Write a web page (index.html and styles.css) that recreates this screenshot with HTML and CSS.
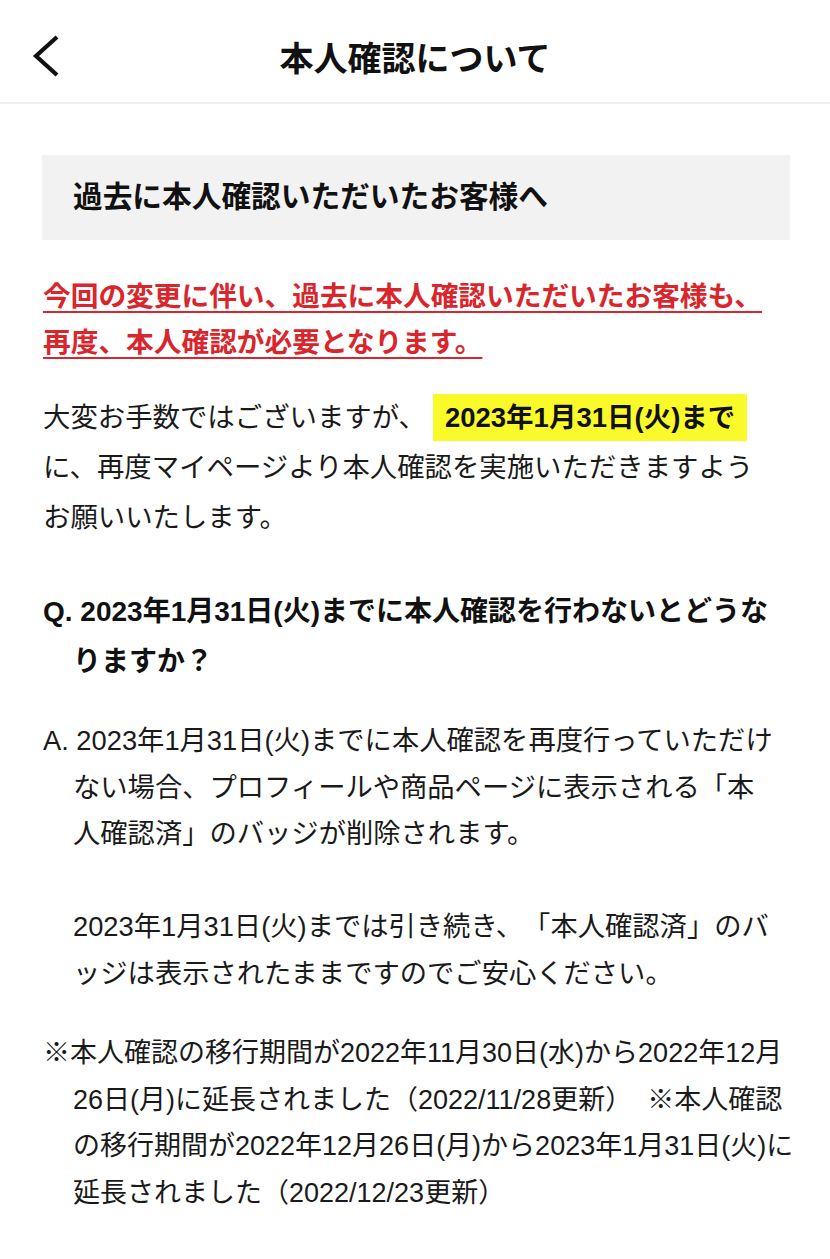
FILE: index.html
```html
<!DOCTYPE html>
<html lang="ja">
<head>
<meta charset="utf-8">
<title>本人確認について</title>
<link rel="stylesheet" href="styles.css">
</head>
<body>
<header class="topbar">
  <div class="topbar-side">
    <svg class="back" width="30" height="50" viewBox="0 0 30 50" aria-hidden="true">
      <path d="M26 6 L5 25 L26 44" fill="none" stroke="#111" stroke-width="4.2" stroke-linecap="butt" stroke-linejoin="miter"/>
    </svg>
  </div>
  <h1 class="topbar-title">本人確認について</h1>
  <div class="topbar-side"></div>
</header>
<main class="content">
  <div class="notice-box">過去に本人確認いただいたお客様へ</div>
  <p class="alert"><span class="alert-text">今回の変更に伴い、過去に本人確認いただいたお客様も、<br>再度、本人確認が必要となります。</span></p>
  <p class="lead">大変お手数ではございますが、<span class="mark">2023年1月31日(火)まで</span><br>に、再度マイページより本人確認を実施いただきますよう<br>お願いいたします。</p>
  <p class="question">Q. 2023年1月31日(火)までに本人確認を行わないとどうな<br>りますか？</p>
  <p class="answer">A. 2023年1月31日(火)までに本人確認を再度行っていただけ<br>ない場合、プロフィールや商品ページに表示される「本<br>人確認済」のバッジが削除されます。<br><br>2023年1月31日(火)までは引き続き、「本人確認済」のバ<br>ッジは表示されたままですのでご安心ください。</p>
  <p class="note">※本人確認の移行期間が2022年11月30日(水)から2022年12月<br>26日(月)に延長されました（2022/11/28更新）&nbsp; ※本人確認<br>の移行期間が2022年12月26日(月)から2023年1月31日(火)に<br>延長されました（2022/12/23更新）</p>
</main>
</body>
</html>
```
FILE: styles.css
```css
* { box-sizing: border-box; }
html, body { margin: 0; padding: 0; background: #fff; }
body {
  font-family: "Liberation Sans", "Noto Sans CJK JP", sans-serif;
  color: #1a1a1a;
  width: 830px;
  text-spacing-trim: space-all;
}
.topbar {
  display: grid;
  grid-template-columns: 1fr auto 1fr;
  align-items: center;
  height: 104px;
  padding-top: 10px;
  border-bottom: 2px solid #efefef;
}
.topbar-side { display: flex; align-items: center; padding-left: 31px; }
.back { display: block; }
.topbar-title {
  margin: 0;
  font-size: 34px;
  font-weight: 700;
  color: #111;
}
.content {
  padding: 0 40px 40px 43px;
}
.notice-box {
  margin: 51px 0 0 -1px;
  height: 85px;
  padding: 0 0 6px 31px;
  display: flex;
  align-items: center;
  background: #f2f2f2;
  font-size: 29.7px;
  font-weight: 700;
  color: #111;
}
p { margin: 0; white-space: nowrap; }
.alert {
  margin-top: 34px;
  font-size: 27.7px;
  line-height: 46px;
  font-weight: 700;
  color: #d8262c;
}
.alert-text {
  text-decoration: underline;
  text-decoration-thickness: 2px;
  text-underline-offset: 5px;
}
.lead {
  margin-top: 27px;
  font-size: 27.4px;
  line-height: 50px;
}
.mark {
  display: inline-block;
  margin-left: 7px;
  padding: 0 12px;
  line-height: 47px;
  background: #fafa2a;
  font-weight: 700;
  font-size: 27.5px;
  color: #111;
}
.question {
  margin-top: 44px;
  font-size: 28px;
  line-height: 50px;
  font-weight: 700;
  color: #111;
  padding-left: 30px;
  text-indent: -30px;
}
.answer {
  margin-top: 31px;
  font-size: 27.3px;
  line-height: 46.5px;
  padding-left: 30px;
  text-indent: -30px;
}
.note {
  margin-top: 33px;
  font-size: 27px;
  line-height: 46.7px;
  padding-left: 30px;
  text-indent: -30px;
}
```
